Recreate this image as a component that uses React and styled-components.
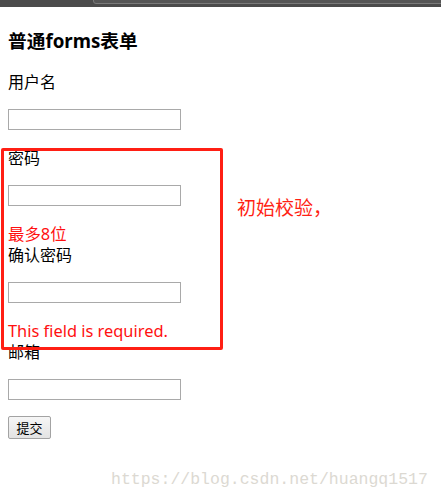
import React from "react";
import styled, { createGlobalStyle } from "styled-components";

const GlobalStyle = createGlobalStyle`
  html, body {
    margin: 0;
    padding: 0;
    background: #fff;
  }
  body {
    font-family: "Noto Sans", "Noto Sans CJK SC", sans-serif;
    color: #000;
  }
`;

const fields = [
  { label: "用户名" },
  { label: "密码", error: "最多8位" },
  { label: "确认密码", error: "This field is required." },
  { label: "邮箱" },
];

const App = () => {
  return (
    <Wrapper>
      <GlobalStyle />
      <TopBar>
        <AddressEdge />
      </TopBar>
      <Form onSubmit={(e) => e.preventDefault()}>
        <Title>普通forms表单</Title>
        {fields.map((f) => (
          <Field key={f.label}>
            <Label>{f.label}</Label>
            <Input type="text" />
            {f.error && <Error>{f.error}</Error>}
          </Field>
        ))}
        <Submit type="submit">提交</Submit>
      </Form>
      <Highlight />
      <Note>初始校验，</Note>
      <Watermark>https://blog.csdn.net/huangq1517</Watermark>
    </Wrapper>
  );
};

const Wrapper = styled.div`
  position: relative;
  width: 441px;
  height: 499px;
  overflow: hidden;
`;

const TopBar = styled.div`
  height: 7px;
  background: #4b4b4b;
  position: relative;
`;

const AddressEdge = styled.div`
  position: absolute;
  left: 93px;
  right: -4px;
  top: -4px;
  height: 6px;
  border: 1px solid #7a7a7a;
  border-radius: 3px;
  background: #555;
`;

const Form = styled.form`
  display: flex;
  flex-direction: column;
  align-items: flex-start;
  padding: 0 8px;
`;

const Title = styled.h3`
  margin: 21px 0 17px;
  font-size: 18.72px;
  line-height: 26px;
  font-weight: bold;
`;

const Field = styled.div`
  display: flex;
  flex-direction: column;
  align-items: flex-start;
`;

const Label = styled.p`
  margin: 0;
  font-size: 16px;
  line-height: 22px;
`;

const Input = styled.input`
  box-sizing: border-box;
  width: 173px;
  height: 21px;
  margin: 16px 0 17px;
  padding: 1px 2px;
  border: 1px solid #a9a9a9;
  background: #fff;
  font-size: 13px;
  outline: none;
`;

const Error = styled.span`
  font-size: 16.4px;
  line-height: 21px;
  color: #ff1010;
`;

const Submit = styled.button`
  box-sizing: border-box;
  width: 43px;
  height: 23px;
  margin-top: -1px;
  padding: 0;
  border: 1px solid #a3a3a3;
  border-radius: 2px;
  background: linear-gradient(#f6f6f6, #e3e3e3);
  font-family: "Noto Sans CJK SC", sans-serif;
  font-size: 13px;
  color: #000;
`;

const Highlight = styled.div`
  position: absolute;
  left: 1px;
  top: 148px;
  width: 216px;
  height: 196px;
  border: 3px solid #ff1f14;
  border-radius: 2px;
`;

const Note = styled.div`
  position: absolute;
  left: 237px;
  top: 194px;
  font-family: "Noto Sans CJK SC", sans-serif;
  font-size: 19px;
  line-height: 26px;
  color: #ff1f14;
`;

const Watermark = styled.div`
  position: absolute;
  left: 111px;
  top: 470px;
  font-family: "Liberation Mono", monospace;
  font-size: 16.5px;
  line-height: 20px;
  color: #dcd9d2;
`;

export default App;
